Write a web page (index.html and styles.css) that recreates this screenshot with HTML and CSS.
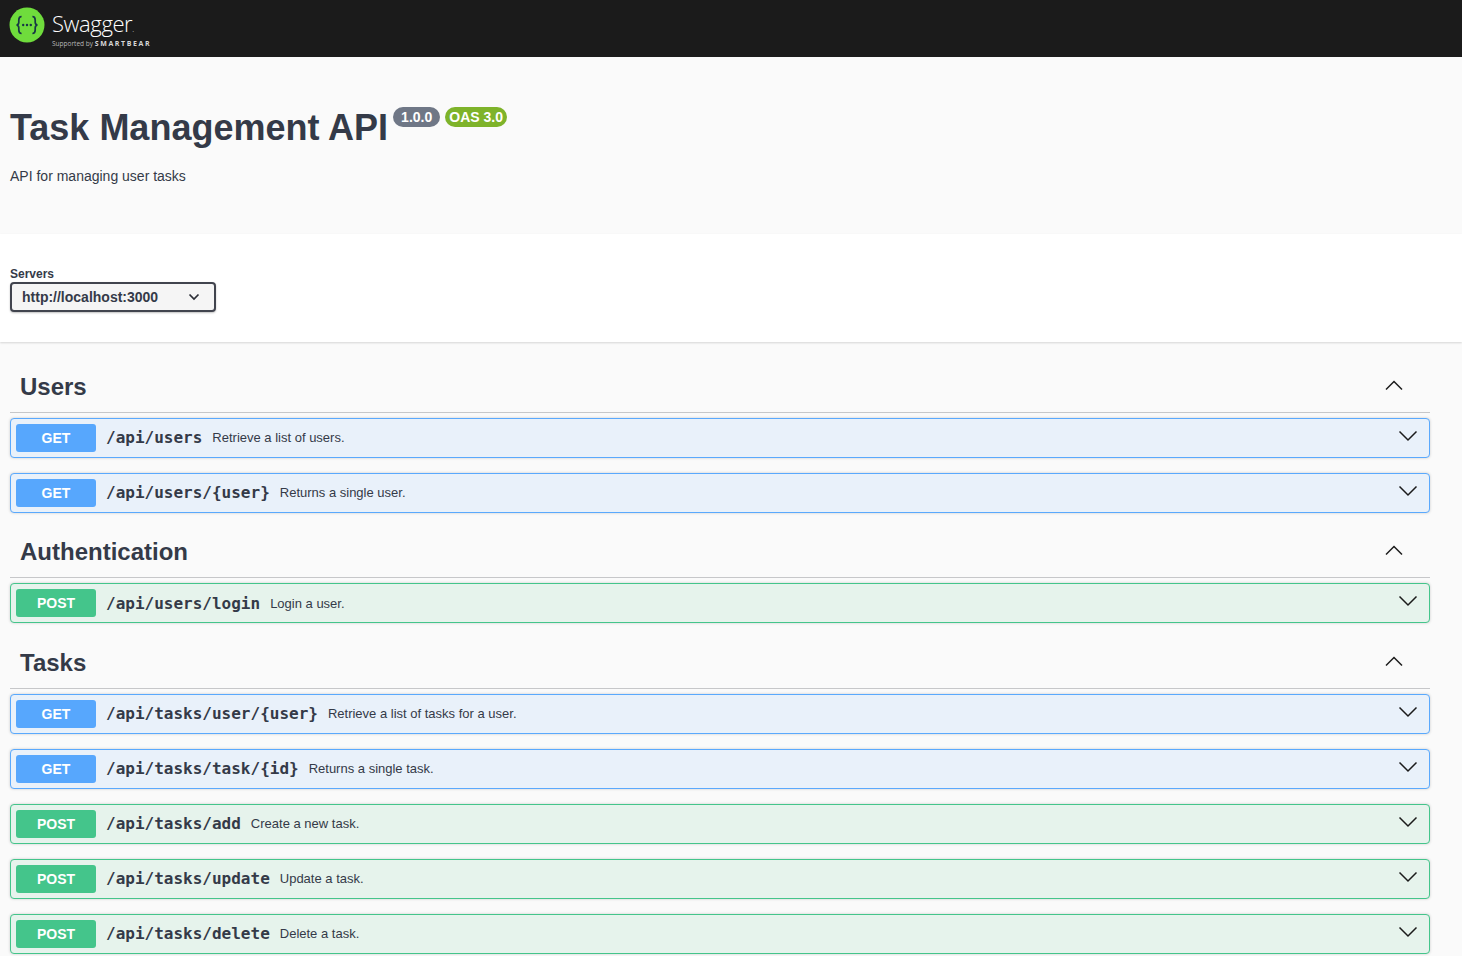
FILE: index.html
```html
<!DOCTYPE html>
<html lang="en">
<head>
<meta charset="utf-8">
<title>Task Management API</title>
<link rel="stylesheet" href="styles.css">
</head>
<body>
<header class="topbar">
  <svg class="logo-mark" width="36" height="36" viewBox="0 0 36 36" aria-hidden="true">
    <circle cx="18" cy="18" r="17.500" fill="#6fdc3c"/>
    <path d="M12.600 9.500c-2.600 0-2.800 1.400-2.800 3.400v2.300c0 1.600-.8 2.500-2.200 2.800 1.400.3 2.200 1.200 2.200 2.800v2.300c0 2 .2 3.400 2.800 3.400" fill="none" stroke="#173646" stroke-width="1.700"/>
    <path d="M23.400 9.500c2.600 0 2.800 1.400 2.800 3.400v2.300c0 1.600.8 2.500 2.200 2.800-1.400.3-2.200 1.200-2.200 2.800v2.300c0 2-.2 3.400-2.800 3.400" fill="none" stroke="#173646" stroke-width="1.700"/>
    <circle cx="14.200" cy="18" r="1.200" fill="#173646"/>
    <circle cx="18" cy="18" r="1.200" fill="#173646"/>
    <circle cx="21.800" cy="18" r="1.200" fill="#173646"/>
  </svg>
  <div class="brand">
    <div class="brand-name">Swagger<span class="brand-tm">.</span></div>
    <div class="brand-sub"><span class="brand-by">Supported by</span> <span class="brand-bear">SMARTBEAR</span></div>
  </div>
</header>

<section class="info">
  <div class="title-row">
    <h1 class="title">Task Management API</h1>
    <span class="pill pill-version">1.0.0</span>
    <span class="pill pill-oas">OAS 3.0</span>
  </div>
  <p class="description">API for managing user tasks</p>
</section>

<section class="schemes">
  <div class="servers-label">Servers</div>
  <div class="server-select">
    <span>http://localhost:3000</span>
    <svg width="12" height="8" viewBox="0 0 12 8" aria-hidden="true"><path d="M1.500 1.500 6 6l4.500-4.500" fill="none" stroke="#2b2e36" stroke-width="1.700"/></svg>
  </div>
</section>

<main class="tags">
  <section class="tag">
    <div class="tag-head">
      <h2 class="tag-name">Users</h2>
      <svg class="tag-arrow" width="20" height="12" viewBox="0 0 20 12" aria-hidden="true"><path d="M2 10.500 10 2.500l8 8" fill="none" stroke="#1b1b1b" stroke-width="1.500"/></svg>
    </div>
    <div class="op op-get">
      <span class="method">GET</span><span class="path">/api/users</span><span class="summary">Retrieve a list of users.</span>
      <svg class="op-arrow" width="20" height="12" viewBox="0 0 20 12" aria-hidden="true"><path d="M1.500 1.500 10 10l8.500-8.500" fill="none" stroke="#1b1b1b" stroke-width="1.500"/></svg>
    </div>
    <div class="op op-get">
      <span class="method">GET</span><span class="path">/api/users/{user}</span><span class="summary">Returns a single user.</span>
      <svg class="op-arrow" width="20" height="12" viewBox="0 0 20 12" aria-hidden="true"><path d="M1.500 1.500 10 10l8.500-8.500" fill="none" stroke="#1b1b1b" stroke-width="1.500"/></svg>
    </div>
  </section>

  <section class="tag">
    <div class="tag-head">
      <h2 class="tag-name">Authentication</h2>
      <svg class="tag-arrow" width="20" height="12" viewBox="0 0 20 12" aria-hidden="true"><path d="M2 10.500 10 2.500l8 8" fill="none" stroke="#1b1b1b" stroke-width="1.500"/></svg>
    </div>
    <div class="op op-post">
      <span class="method">POST</span><span class="path">/api/users/login</span><span class="summary">Login a user.</span>
      <svg class="op-arrow" width="20" height="12" viewBox="0 0 20 12" aria-hidden="true"><path d="M1.500 1.500 10 10l8.500-8.500" fill="none" stroke="#1b1b1b" stroke-width="1.500"/></svg>
    </div>
  </section>

  <section class="tag">
    <div class="tag-head">
      <h2 class="tag-name">Tasks</h2>
      <svg class="tag-arrow" width="20" height="12" viewBox="0 0 20 12" aria-hidden="true"><path d="M2 10.500 10 2.500l8 8" fill="none" stroke="#1b1b1b" stroke-width="1.500"/></svg>
    </div>
    <div class="op op-get">
      <span class="method">GET</span><span class="path">/api/tasks/user/{user}</span><span class="summary">Retrieve a list of tasks for a user.</span>
      <svg class="op-arrow" width="20" height="12" viewBox="0 0 20 12" aria-hidden="true"><path d="M1.500 1.500 10 10l8.500-8.500" fill="none" stroke="#1b1b1b" stroke-width="1.500"/></svg>
    </div>
    <div class="op op-get">
      <span class="method">GET</span><span class="path">/api/tasks/task/{id}</span><span class="summary">Returns a single task.</span>
      <svg class="op-arrow" width="20" height="12" viewBox="0 0 20 12" aria-hidden="true"><path d="M1.500 1.500 10 10l8.500-8.500" fill="none" stroke="#1b1b1b" stroke-width="1.500"/></svg>
    </div>
    <div class="op op-post">
      <span class="method">POST</span><span class="path">/api/tasks/add</span><span class="summary">Create a new task.</span>
      <svg class="op-arrow" width="20" height="12" viewBox="0 0 20 12" aria-hidden="true"><path d="M1.500 1.500 10 10l8.500-8.500" fill="none" stroke="#1b1b1b" stroke-width="1.500"/></svg>
    </div>
    <div class="op op-post">
      <span class="method">POST</span><span class="path">/api/tasks/update</span><span class="summary">Update a task.</span>
      <svg class="op-arrow" width="20" height="12" viewBox="0 0 20 12" aria-hidden="true"><path d="M1.500 1.500 10 10l8.500-8.500" fill="none" stroke="#1b1b1b" stroke-width="1.500"/></svg>
    </div>
    <div class="op op-post">
      <span class="method">POST</span><span class="path">/api/tasks/delete</span><span class="summary">Delete a task.</span>
      <svg class="op-arrow" width="20" height="12" viewBox="0 0 20 12" aria-hidden="true"><path d="M1.500 1.500 10 10l8.500-8.500" fill="none" stroke="#1b1b1b" stroke-width="1.500"/></svg>
    </div>
  </section>
</main>
</body>
</html>
```

FILE: styles.css
```css
* { box-sizing: border-box; }

html, body {
  margin: 0;
  padding: 0;
  background: #fafafa;
  color: #343a48;
  font-family: "Liberation Sans", Arial, sans-serif;
}

body { overflow: hidden; height: 956px; }

.topbar {
  height: 57px;
  background: #1b1b1b;
  display: flex;
  align-items: flex-start;
  padding: 6.500px 0 0 9px;
  gap: 7px;
}

.brand { color: #fff; margin-top: 4px; }

.brand-name {
  font-family: "Open Sans", sans-serif;
  font-weight: 300;
  font-size: 22px;
  line-height: 25px;
  letter-spacing: -0.400px;
}

.brand-tm { font-size: 8px; }

.brand-sub {
  font-size: 6.500px;
  line-height: 8px;
  margin-top: -1px;
  color: #b9b9b9;
  white-space: nowrap;
}

.brand-by { font-family: "Open Sans", sans-serif; }

.brand-bear {
  color: #d8d8d8;
  font-family: "Open Sans", sans-serif;
  font-weight: 700;
  font-size: 7px;
  letter-spacing: 1.600px;
}

.info {
  height: 177px;
  padding: 50px 10px 0;
}

.title-row { display: flex; align-items: flex-start; }

.title {
  margin: 0;
  font-size: 36px;
  line-height: 42px;
  font-weight: 700;
}

.pill {
  height: 20px;
  border-radius: 10px;
  color: #fff;
  font-size: 14px;
  line-height: 20px;
  font-weight: 700;
  padding: 0 4px;
}

.pill-version { background: #6f7786; margin-left: 5px; padding: 0 8px; }
.pill-oas { background: #7eb32a; margin-left: 5px; }

.description {
  margin: 17px 0 0;
  font-size: 14px;
  line-height: 20px;
}

.schemes {
  height: 108px;
  background: #fff;
  padding: 33px 10px 0;
  box-shadow: 0 1px 2px 0 rgba(0, 0, 0, 0.15);
}

.servers-label {
  font-size: 12px;
  line-height: 14px;
  font-weight: 700;
}

.server-select {
  width: 206px;
  height: 30px;
  margin-top: 1px;
  display: flex;
  align-items: center;
  justify-content: space-between;
  padding: 0 14px 0 10px;
  background: #f5f5f5;
  border: 2px solid #41444e;
  border-radius: 4px;
  box-shadow: 0 1px 2px 0 rgba(0, 0, 0, 0.25);
  font-size: 14px;
  font-weight: 700;
}

.tags { padding: 20.400px 32px 0 10px; }

.tag-head {
  height: 50.400px;
  display: flex;
  align-items: center;
  justify-content: space-between;
  padding: 0 26px 0 10px;
  border-bottom: 1px solid #c6c7c9;
  margin-bottom: 5px;
}

.tag-name {
  margin: 0;
  font-size: 24px;
  line-height: 30px;
  font-weight: 700;
}

.tag-arrow { margin-bottom: 4px; }

.op {
  height: 40px;
  margin-bottom: 15px;
  display: flex;
  align-items: center;
  padding: 0 11px 0 5px;
  border: 1px solid;
  border-radius: 4px;
  box-shadow: 0 0 3px rgba(0, 0, 0, 0.19);
}

.op-get { background: #e9f1fa; border-color: #5aa9fd; }
.op-post { background: #e6f3ec; border-color: #44c58b; }

.method {
  width: 80px;
  height: 28px;
  flex: none;
  border-radius: 3px;
  color: #fff;
  font-size: 14px;
  font-weight: 700;
  line-height: 28px;
  text-align: center;
}

.op-get .method { background: #57a7fd; }
.op-post .method { background: #44c58b; }

.path {
  margin-left: 10px;
  font-family: "DejaVu Sans Mono", monospace;
  font-size: 16px;
  font-weight: 600;
}

.summary {
  margin-left: 10px;
  font-size: 13px;
}

.op-arrow { margin-left: auto; margin-bottom: 4px; }
```
